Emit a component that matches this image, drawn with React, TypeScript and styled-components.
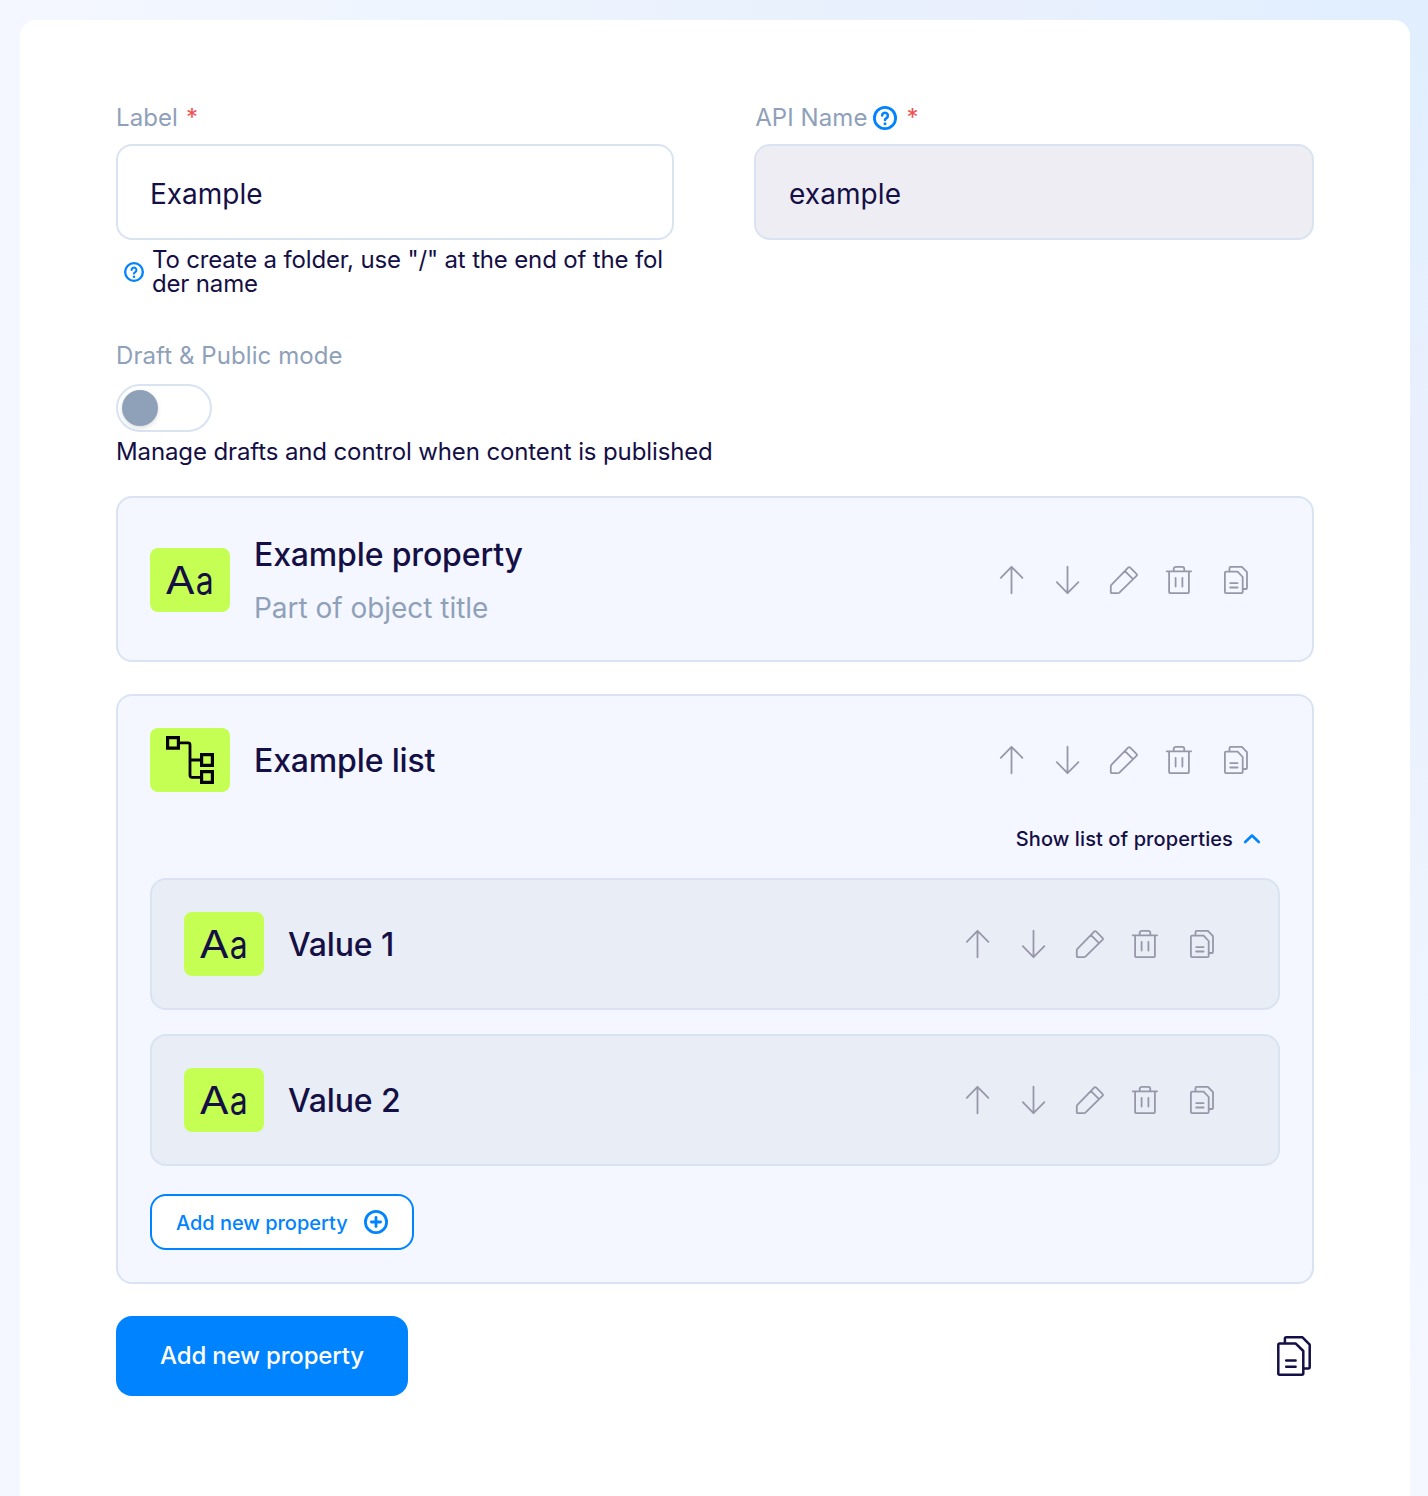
import React, { useState } from "react";
import styled, { createGlobalStyle } from "styled-components";

const color = {
  ink: "#140f45",
  muted: "#8fa0b9",
  line: "#d9e3f2",
  blue: "#0083ff",
  lime: "#c6ff53",
  icon: "#9797a9",
  required: "#f05252",
};

const GlobalStyle = createGlobalStyle`
  * { box-sizing: border-box; }
  body {
    margin: 0;
    font-family: Inter, "Liberation Sans", sans-serif;
    color: ${color.ink};
  }
  button, input { font-family: inherit; }
`;

const Page = styled.div`
  height: 1496px;
  overflow: hidden;
  padding: 20px 18px 0 20px;
  background: radial-gradient(
    circle at 100% 0%,
    #e0eefe 0,
    #e5f0fe 250px,
    #e9effd 420px,
    #e9f1fd 650px,
    #edf4fe 900px,
    #f4f7ff 1400px
  );
`;

const Panel = styled.main`
  height: 1500px;
  padding: 80px 96px 0;
  border-radius: 16px;
  background: #fff;
`;

const FieldGrid = styled.div`
  display: grid;
  grid-template-columns: 558.4px 1fr;
  gap: 80px;
  height: 196px;
`;

const Field = styled.div`
  min-width: 0;
`;

const FieldLabel = styled.div<{ $indent?: number }>`
  display: flex;
  align-items: center;
  height: 36px;
  padding-left: ${(p) => p.$indent ?? 0}px;
  font-size: 24px;
  line-height: 36px;
  letter-spacing: 0.08px;
  color: ${color.muted};
`;

const Required = styled.span<{ $gap: number }>`
  margin-left: ${(p) => p.$gap}px;
  color: ${color.required};
`;

const LabelIcon = styled.span`
  display: flex;
  margin-left: 6px;
`;

const TextInput = styled.input`
  display: block;
  width: 100%;
  height: 96px;
  margin-top: 8px;
  padding: 4px 32px 0;
  border: 2px solid ${color.line};
  border-radius: 16px;
  outline: none;
  background: #fff;
  color: ${color.ink};
  font-size: 28px;
  letter-spacing: 0;

  &:disabled {
    padding-left: 32.6px;
    background: #eeedf4;
    letter-spacing: 0.1px;
    opacity: 1;
  }
`;

const Hint = styled.div`
  display: flex;
  align-items: center;
  gap: 8px;
  margin-top: 8px;
  padding-left: 8px;
  font-size: 24px;
  line-height: 24px;
  letter-spacing: -0.16px;
  word-break: break-all;

  svg { flex: none; }
`;

const ModeSection = styled.section`
  height: 200px;
  padding-top: 42px;
`;

const Switch = styled.button`
  display: flex;
  align-items: center;
  width: 96px;
  height: 48px;
  margin-top: 10px;
  padding: 0 4px;
  border: 2px solid ${color.line};
  border-radius: 24px;
  background: #fff;
`;

const Knob = styled.span<{ $on: boolean }>`
  width: 36px;
  height: 36px;
  margin-left: ${(p) => (p.$on ? 48 : 0)}px;
  border-radius: 50%;
  background: ${(p) => (p.$on ? color.blue : color.muted)};
  box-shadow: 0 2px 4px rgba(0, 35, 11, 0.14);
`;

const ModeNote = styled.p`
  margin: 2px 0 0;
  font-size: 24px;
  line-height: 36px;
  letter-spacing: -0.12px;
`;

const CardStack = styled.div`
  display: grid;
  gap: 32px;
`;

const Card = styled.section`
  padding: 32px;
  border: 2px solid ${color.line};
  border-radius: 16px;
  background: #f4f7ff;
`;

const NestedCard = styled(Card)`
  background: #e9edf6;
`;

const Row = styled.div<{ $height: number; $top?: number }>`
  display: flex;
  align-items: center;
  height: ${(p) => p.$height}px;
  padding-top: ${(p) => p.$top ?? 0}px;
`;

const Badge = styled.div`
  display: flex;
  align-items: center;
  justify-content: center;
  width: 80px;
  height: 64px;
  margin-right: 24px;
  border-radius: 8px;
  background: ${color.lime};
`;

const Letters = styled.span`
  display: flex;
  height: 48px;
  font-size: 38px;
  font-weight: 400;
  line-height: 48px;
`;

const Letter = styled.span<{ $stretch: number; $space: number }>`
  display: block;
  margin-left: ${(p) => p.$space}px;
  transform: scaleX(${(p) => p.$stretch});
`;

const Titles = styled.div`
  flex: 1;
`;

const Title = styled.h2`
  margin: 0;
  padding-top: 2px;
  font-size: 32px;
  font-weight: 500;
  line-height: 48px;
  letter-spacing: -0.15px;
`;

const Subtitle = styled.div`
  margin: 8px 0 2px;
  font-size: 28px;
  line-height: 42px;
  letter-spacing: -0.03px;
  color: ${color.muted};
`;

const Actions = styled.div`
  display: flex;
  gap: 24px;
  margin-right: 28px;
`;

const IconButton = styled.button`
  display: flex;
  padding: 0;
  border: 0;
  background: none;
  color: ${color.icon};
`;

const ToggleList = styled.button`
  display: flex;
  align-items: center;
  gap: 7px;
  height: 30px;
  margin: 32px 16px 24px auto;
  padding: 0;
  border: 0;
  background: none;
  color: ${color.ink};
  font-size: 20px;
  font-weight: 500;
  letter-spacing: 0.1px;
`;

const NestedStack = styled.div`
  display: grid;
  gap: 24px;
`;

const OutlineButton = styled.button`
  display: flex;
  align-items: center;
  justify-content: space-between;
  width: 264px;
  height: 56px;
  margin-top: 28px;
  padding: 0 24px;
  border: 2px solid ${color.blue};
  border-radius: 16px;
  background: #fff;
  color: ${color.blue};
  font-size: 20px;
  font-weight: 500;
  letter-spacing: -0.03px;
`;

const OutlineText = styled.span`
  padding-top: 2px;
`;

const Footer = styled.footer`
  display: flex;
  align-items: center;
  justify-content: space-between;
  margin-top: 32px;
`;

const PrimaryButton = styled.button`
  width: 292px;
  height: 80px;
  padding: 0 0 2px;
  border: 0;
  border-radius: 16px;
  background: ${color.blue};
  color: #fff;
  font-size: 24px;
  font-weight: 500;
  letter-spacing: -0.17px;
`;

const HelpIcon = ({ size }: { size: number }) => (
  <svg width={size} height={size} viewBox="0 0 24 24" fill="none" stroke={color.blue} strokeLinecap="round">
    <circle cx="12" cy="12" r="10.6" strokeWidth="2.8" />
    <path d="M9.1 9.6a2.9 2.9 0 1 1 4.4 2.5c-1 .6-1.5 1-1.5 1.8" strokeWidth="2.5" />
    <circle cx="12" cy="17.7" r="1.5" fill={color.blue} stroke="none" />
  </svg>
);

const PlusIcon = () => (
  <svg width="24" height="24" viewBox="0 0 24 24" fill="none" stroke={color.blue} strokeLinecap="round">
    <circle cx="12" cy="12" r="10.6" strokeWidth="2.8" />
    <path d="M7.4 12h9.2M12 7.4v9.2" strokeWidth="2.8" />
  </svg>
);

const ChevronIcon = ({ open }: { open: boolean }) => (
  <svg width="24" height="24" viewBox="0 0 24 24" fill="none" stroke={color.blue} strokeWidth="2.6" strokeLinecap="round" strokeLinejoin="round">
    <path d={open ? "M5.2 15 12 8.5l6.8 6.5" : "M5.2 8.8l6.8 6.6 6.8-6.6"} />
  </svg>
);

const TreeIcon = () => (
  <svg width="48" height="48" viewBox="0 0 48 48" fill="none" stroke="#000" strokeWidth="3.2">
    <path d="M1.6 1.6h10.8v10.6H1.6zM35.6 18.6h10.8v10.8H35.6zM35.6 35.6h10.8v10.8H35.6z" />
    <path d="M13 6.8h9a2 2 0 0 1 2 2v30.5a2 2 0 0 0 2 2h9M24 24h11" strokeWidth="2.8" />
  </svg>
);

const actionPaths: Record<string, string> = {
  "Move up": "M15.5 29.3V2.8M4.8 13.8 15.5 2.8 26.4 13.8",
  "Move down": "M15.5 2.7v26.5M4.8 18.2l10.7 11L26.4 18.2",
  Edit: "M2.8 28.2v-6a2 2 0 0 1 .6-1.4L20.4 3.4a1.1 1.1 0 0 1 1.6 0l6.7 6.7a1.1 1.1 0 0 1 0 1.6L11.4 28.6a2 2 0 0 1-1.3.5H3.7a.9.9 0 0 1-.9-.9zM17 7.2l8 8",
  Delete: "M2.7 7.3h24.4M9.7 7.3V5a2.2 2.2 0 0 1 2.2-2.2h6.2A2.2 2.2 0 0 1 20.3 5v2.3M5.1 7.3v20.6a1.3 1.3 0 0 0 1.3 1.3h17.2a1.3 1.3 0 0 0 1.3-1.3V7.3M11.6 13.8v8.8M18.4 13.8v8.8",
  Copy: "M17.6 7.6H6a1.1 1.1 0 0 0-1.1 1.1v19.4A1.1 1.1 0 0 0 6 29.2h15.6a1.1 1.1 0 0 0 1.1-1.1V13zM9.5 7.6V3.9a1.1 1.1 0 0 1 1.1-1.1h11.3l5.1 5.3v15.8a1.1 1.1 0 0 1-1.1 1.1h-3.2M10.2 19.1h7.4M10.2 23.5h7.4",
};

const CopyAllIcon = () => (
  <svg width="40" height="40" viewBox="0 0 40 40" fill="none" stroke={color.ink} strokeWidth="2.5" strokeLinecap="round" strokeLinejoin="round">
    <path d="M21.8 7.6H5.7a1.4 1.4 0 0 0-1.4 1.4v28.3a1.4 1.4 0 0 0 1.4 1.4h22.2a1.4 1.4 0 0 0 1.4-1.4V15zM10.9 7.6V2.7a1.4 1.4 0 0 1 1.4-1.4h16.2l7.2 7.3v22.5a1.4 1.4 0 0 1-1.4 1.4h-5M12.2 24.6h9.4M12.2 30.7h9.4" />
  </svg>
);

const RowActions = () => (
  <Actions>
    {Object.entries(actionPaths).map(([name, d]) => (
      <IconButton key={name} aria-label={name}>
        <svg width="32" height="32" viewBox="0 0 32 32" fill="none" stroke="currentColor" strokeWidth="1.8" strokeLinecap="round" strokeLinejoin="round">
          <path d={d} />
        </svg>
      </IconButton>
    ))}
  </Actions>
);

const TextBadge = () => (
  <Badge>
    <Letters>
      <Letter $stretch={1.16} $space={2}>A</Letter>
      <Letter $stretch={0.84} $space={1}>a</Letter>
    </Letters>
  </Badge>
);

export default function App() {
  const [label, setLabel] = useState("Example");
  const [drafts, setDrafts] = useState(false);
  const [open, setOpen] = useState(true);

  return (
    <>
      <GlobalStyle />
      <Page>
        <Panel>
          <FieldGrid>
            <Field>
              <FieldLabel>
                Label<Required $gap={8}>*</Required>
              </FieldLabel>
              <TextInput value={label} onChange={(e) => setLabel(e.target.value)} />
              <Hint>
                <HelpIcon size={20} />
                <span>To create a folder, use "/" at the end of the folder name</span>
              </Hint>
            </Field>
            <Field>
              <FieldLabel $indent={0.8}>
                API Name
                <LabelIcon><HelpIcon size={24} /></LabelIcon>
                <Required $gap={9}>*</Required>
              </FieldLabel>
              <TextInput value="example" disabled readOnly />
            </Field>
          </FieldGrid>

          <ModeSection>
            <FieldLabel>Draft &amp; Public mode</FieldLabel>
            <Switch onClick={() => setDrafts(!drafts)} aria-label="Draft & Public mode">
              <Knob $on={drafts} />
            </Switch>
            <ModeNote>Manage drafts and control when content is published</ModeNote>
          </ModeSection>

          <CardStack>
            <Card>
              <Row $height={98} $top={2}>
                <TextBadge />
                <Titles>
                  <Title>Example property</Title>
                  <Subtitle>Part of object title</Subtitle>
                </Titles>
                <RowActions />
              </Row>
            </Card>

            <Card>
              <Row $height={64}>
                <Badge><TreeIcon /></Badge>
                <Titles><Title>Example list</Title></Titles>
                <RowActions />
              </Row>
              <ToggleList onClick={() => setOpen(!open)}>
                Show list of properties
                <ChevronIcon open={open} />
              </ToggleList>
              {open && (
                <NestedStack>
                  {["Value 1", "Value 2"].map((name) => (
                    <NestedCard key={name}>
                      <Row $height={64}>
                        <TextBadge />
                        <Titles><Title>{name}</Title></Titles>
                        <RowActions />
                      </Row>
                    </NestedCard>
                  ))}
                </NestedStack>
              )}
              <OutlineButton>
                <OutlineText>Add new property</OutlineText>
                <PlusIcon />
              </OutlineButton>
            </Card>
          </CardStack>

          <Footer>
            <PrimaryButton>Add new property</PrimaryButton>
            <IconButton aria-label="Copy all"><CopyAllIcon /></IconButton>
          </Footer>
        </Panel>
      </Page>
    </>
  );
}
